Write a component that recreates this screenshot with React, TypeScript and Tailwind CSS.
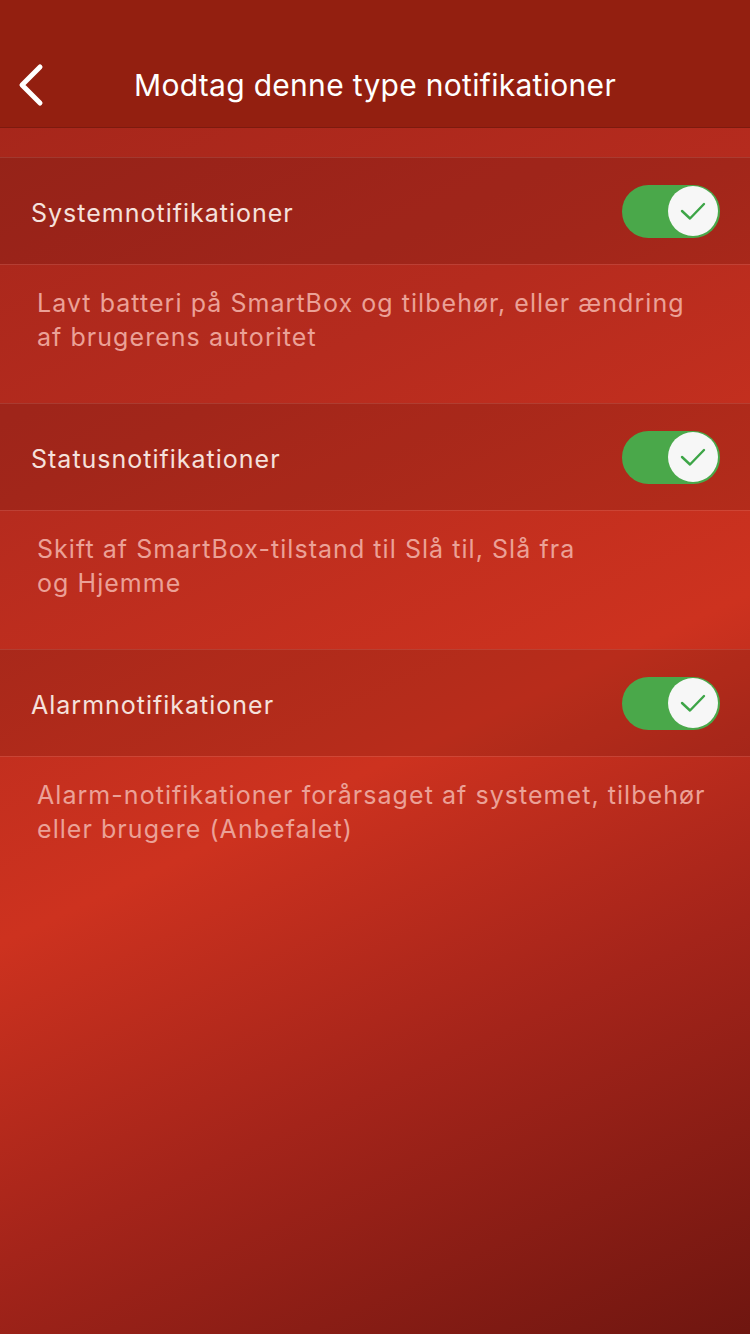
import React, { useState } from 'react';

type Item = { title: string; lines: string[] };

const ITEMS: Item[] = [
  { title: 'Systemnotifikationer', lines: ['Lavt batteri på SmartBox og tilbehør, eller ændring', 'af brugerens autoritet'] },
  { title: 'Statusnotifikationer', lines: ['Skift af SmartBox-tilstand til Slå til, Slå fra', 'og Hjemme'] },
  { title: 'Alarmnotifikationer', lines: ['Alarm-notifikationer forårsaget af systemet, tilbehør', 'eller brugere (Anbefalet)'] },
];

const Toggle: React.FC<{ on: boolean; onClick: () => void }> = ({ on, onClick }) => (
  <button
    onClick={onClick}
    className={`relative w-[98px] h-[53px] rounded-full flex items-center px-[2px] ${on ? 'bg-[#4aa84a] justify-end' : 'bg-[#7a1a10] justify-start'}`}
  >
    <span className="w-[50px] h-[50px] rounded-full bg-[#f7f7f7] flex items-center justify-center">
      {on && (
        <svg width="26" height="20" viewBox="0 0 26 20" fill="none">
          <path d="M2 10 L10 17.5 L24 3" stroke="#3da547" strokeWidth="2.4" strokeLinecap="round" strokeLinejoin="round" />
        </svg>
      )}
    </span>
  </button>
);

export default function App() {
  const [states, setStates] = useState([true, true, true]);

  return (
    <div
      className="w-[750px] h-[1334px] overflow-hidden"
      style={{
        fontFamily: 'Inter, Roboto, "Noto Sans", sans-serif',
        background: 'linear-gradient(155deg, #a2251a 0%, #b52b1e 30%, #cd321f 56%, #a4241a 75%, #6f1610 100%)',
      }}
    >
      <header className="h-[128px] bg-[#931f10] border-b border-[#7d1a0e] pt-[44px] flex items-center relative">
        <button className="absolute left-[16px] top-[63px]" aria-label="Tilbage">
          <svg width="30" height="44" viewBox="0 0 30 44" fill="none">
            <path d="M24 4 L6 22 L24 40" stroke="#ffffff" strokeWidth="5" strokeLinecap="round" strokeLinejoin="round" />
          </svg>
        </button>
        <h1 className="w-full text-center text-white text-[30px] tracking-[0.3px]">Modtag denne type notifikationer</h1>
      </header>

      <div className="h-[29px]" />

      {ITEMS.map((item, i) => (
        <section key={item.title}>
          <div className="h-[107px] bg-black/10 border-t border-white/10 flex items-center justify-between pl-[31px] pr-[30px]">
            <span className="text-[25px] text-[#f5e1dc] tracking-[1px] pt-[5px]">{item.title}</span>
            <Toggle
              on={states[i]}
              onClick={() => setStates(s => s.map((v, j) => (j === i ? !v : v)))}
            />
          </div>
          <div className="h-[139px] border-t border-white/10 pl-[37px] pr-[20px] pt-[21px]">
            <p className="text-[25px] leading-[34px] text-[#eba197] tracking-[1.05px] whitespace-nowrap">
              {item.lines.map(l => (
                <span key={l} className="block">{l}</span>
              ))}
            </p>
          </div>
        </section>
      ))}
    </div>
  );
}
